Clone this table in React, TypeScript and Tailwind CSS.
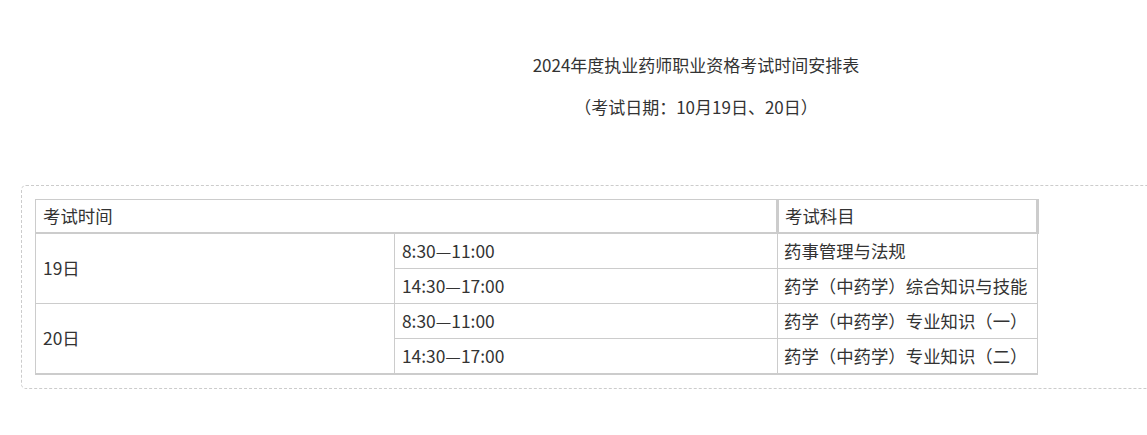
import React from 'react';

const rows = [
  { day: '19日', slots: [['8:30—11:00', '药事管理与法规'], ['14:30—17:00', '药学（中药学）综合知识与技能']] },
  { day: '20日', slots: [['8:30—11:00', '药学（中药学）专业知识（一）'], ['14:30—17:00', '药学（中药学）专业知识（二）']] },
];

export default function App() {
  return (
    <div className="w-full h-[435px] overflow-hidden bg-white text-[#333]" style={{ fontFamily: '"Microsoft YaHei", "Noto Sans CJK SC", sans-serif' }}>
      <div className="w-[1371px] pl-[21px]">
        <div className="text-center text-[17px] leading-[26px] pt-[52px]">
          <p>2024年度执业药师职业资格考试时间安排表</p>
          <p className="mt-[16px]">（考试日期：10月19日、20日）</p>
        </div>

        <div className="mt-[65px] border border-dashed border-[#ccc] rounded-[5px] p-[13px]">
          <table className="w-[1004px] border-collapse text-[17.4px] text-left whitespace-nowrap">
            <thead>
              <tr>
                <th colSpan={2} className="font-normal border border-[#ccc] border-b-2 px-[7px] leading-[32px]">考试时间</th>
                <th className="font-normal border border-[#ccc] border-b-2 border-l-[3px] border-r-[3px] px-[6px] leading-[32px] w-[260px]">考试科目</th>
              </tr>
            </thead>
            <tbody>
              {rows.map((r, ri) =>
                r.slots.map(([time, subj], si) => {
                  const last = ri === rows.length - 1 && si === 1;
                  const b = last ? 'border-b-2' : '';
                  return (
                    <tr key={ri + '-' + si}>
                      {si === 0 && (
                        <td rowSpan={2} className={`border border-[#ccc] px-[7px] w-[360px] ${ri === rows.length - 1 ? 'border-b-2' : ''}`}>{r.day}</td>
                      )}
                      <td className={`border border-[#ccc] px-[7px] leading-[34px] w-[384px] ${b}`}>{time}</td>
                      <td className={`border border-[#ccc] px-[6px] leading-[34px] ${b}`}>{subj}</td>
                    </tr>
                  );
                })
              )}
            </tbody>
          </table>
        </div>
      </div>
    </div>
  );
}
